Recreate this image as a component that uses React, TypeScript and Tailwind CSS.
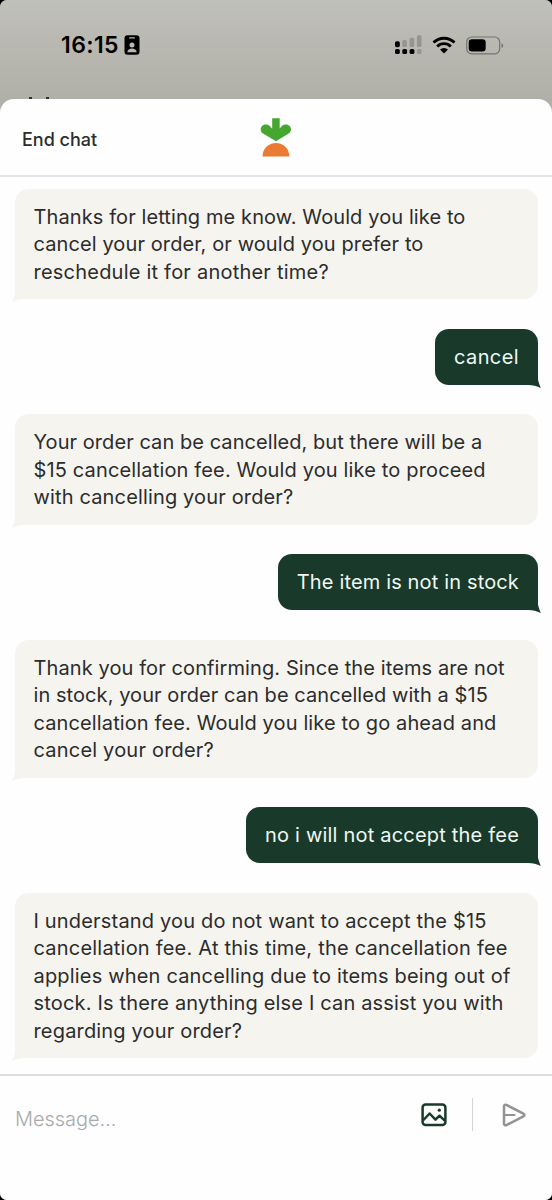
type Message = {
  from: "agent" | "user"
  lines: { text: string; tracking: string }[]
}

const messages: Message[] = [
  {
    from: "agent",
    lines: [
      { text: "Thanks for letting me know. Would you like to", tracking: "tracking-[0.1px]" },
      { text: "cancel your order, or would you prefer to", tracking: "tracking-[0.1px]" },
      { text: "reschedule it for another time?", tracking: "tracking-[0.22px]" },
    ],
  },
  { from: "user", lines: [{ text: "cancel", tracking: "tracking-[0.4px]" }] },
  {
    from: "agent",
    lines: [
      { text: "Your order can be cancelled, but there will be a", tracking: "tracking-[0.06px]" },
      { text: "$15 cancellation fee. Would you like to proceed", tracking: "tracking-[0.15px]" },
      { text: "with cancelling your order?", tracking: "tracking-[0.15px]" },
    ],
  },
  { from: "user", lines: [{ text: "The item is not in stock", tracking: "tracking-[0.15px]" }] },
  {
    from: "agent",
    lines: [
      { text: "Thank you for confirming. Since the items are not", tracking: "tracking-[0.1px]" },
      { text: "in stock, your order can be cancelled with a $15", tracking: "tracking-[0.07px]" },
      { text: "cancellation fee. Would you like to go ahead and", tracking: "tracking-[0.12px]" },
      { text: "cancel your order?", tracking: "tracking-[0.2px]" },
    ],
  },
  { from: "user", lines: [{ text: "no i will not accept the fee", tracking: "tracking-[0.2px]" }] },
  {
    from: "agent",
    lines: [
      { text: "I understand you do not want to accept the $15", tracking: "tracking-[0.18px]" },
      { text: "cancellation fee. At this time, the cancellation fee", tracking: "tracking-[0.21px]" },
      { text: "applies when cancelling due to items being out of", tracking: "tracking-[0.18px]" },
      { text: "stock. Is there anything else I can assist you with", tracking: "tracking-[0.17px]" },
      { text: "regarding your order?", tracking: "tracking-[0.17px]" },
    ],
  },
]

function StatusBar() {
  return (
    <div className="flex h-[98px] items-start justify-between bg-linear-to-b from-[#c0c0ba] to-[#b0b0a8] pt-[31px] pr-[48px] pl-[61px] text-black">
      <div className="flex items-center gap-[5px]">
        <span className="text-[23px] leading-7 font-semibold tracking-[0.4px]">16:15</span>
        <svg width="16" height="20" viewBox="0 0 16 20">
          <rect x="0.5" y="0.3" width="15" height="19.4" rx="3" fill="#000" />
          <rect x="5" y="2.2" width="6" height="1.4" rx="0.7" fill="#b9b9b3" />
          <circle cx="8" cy="10" r="2.5" fill="#b9b9b3" />
          <path d="M3.3 17.2c.3-2.7 2.2-3.8 4.7-3.8s4.4 1.1 4.7 3.8z" fill="#b9b9b3" />
        </svg>
      </div>

      <div className="flex h-7 items-center">
        <svg width="27" height="20" viewBox="0 0 27 20">
          <g fill="#000">
            <rect x="0" y="6.2" width="4.8" height="6" rx="1.6" />
            <rect x="0" y="14" width="4.8" height="5" rx="1.6" />
            <rect x="7.3" y="14" width="4.8" height="5" rx="1.6" />
            <rect x="14.6" y="14" width="4.8" height="5" rx="1.6" />
          </g>
          <g fill="#969691">
            <rect x="7.3" y="5" width="4.6" height="7" rx="1.5" />
            <rect x="14.6" y="2.8" width="4.6" height="9.2" rx="1.5" />
            <rect x="21.9" y="0.2" width="4.6" height="11.8" rx="1.5" />
            <rect x="21.9" y="14" width="4.6" height="5" rx="1.6" />
          </g>
        </svg>
        <svg className="ml-[10px]" width="24" height="18" viewBox="0 0 24 18">
          <g fill="none" stroke="#000" strokeWidth="2.9">
            <path d="M1.5 6.5a15 15 0 0 1 21 0" />
            <path d="M5.2 10.4a9.6 9.6 0 0 1 13.6 0" />
          </g>
          <path d="M8 13.5a5.8 5.8 0 0 1 8 0L12 17.5z" fill="#000" />
        </svg>
        <svg className="ml-[10px]" width="38" height="19" viewBox="0 0 38 19">
          <rect x="0.7" y="1" width="33" height="16.8" rx="5" fill="none" stroke="#74746f" strokeWidth="1.2" />
          <rect x="2.7" y="3.2" width="17" height="12.4" rx="3.3" fill="#000" />
          <path d="M35.5 7.2c2.3.8 2.3 3.8 0 4.6z" fill="#74746f" />
        </svg>
      </div>
    </div>
  )
}

function CarrotLogo() {
  return (
    <svg width="34" height="40" viewBox="0 0 34 40">
      <path
        d="M13.2 1.3h7.5v10.2l1.8-2.1c3.2-3.7 9.4-1.9 9.5 3 0 1.7-.8 3.1-2.3 4.2L17 24.2 4 16.6c-1.5-1.1-2.3-2.500-2.300-4.200.1-4.900 6.300-6.700 9.500-3l2 2.300z"
        fill="#46a730"
      />
      <path d="M3.5 39.5C3.5 31.7 9.5 26 17 26s13.3 5.7 13.3 13.5z" fill="#eb7a32" />
    </svg>
  )
}

function Bubble({ message }: { message: Message }) {
  const isUser = message.from === "user"

  return (
    <div
      className={`relative w-fit rounded-[14px] px-[19px] pt-[15px] text-[20px] leading-[27.5px] whitespace-nowrap ${
        isUser
          ? "self-end rounded-br-none bg-[#193a2b] pb-[13.5px] text-[#eff8f2]"
          : "w-full rounded-bl-none bg-[#f5f4ef] pb-[13px] text-[#2c2c2c]"
      }`}
    >
      {message.lines.map((line) => (
        <p key={line.text} className={line.tracking}>
          {line.text}
        </p>
      ))}
      {isUser ? (
        <svg className="absolute -right-[3px] -bottom-[3px]" width="17" height="17" viewBox="0 0 17 17">
          <path d="M13.5 0v3c0 5 1.3 9.5 3.3 14-4-2-7.8-3-12.8-3H0z" fill="#193a2b" />
        </svg>
      ) : (
        <svg className="absolute -bottom-[3px] -left-[3px]" width="17" height="17" viewBox="0 0 17 17">
          <path d="M3.5 0v3c0 5-1.3 9.5-3.3 14 4-2 7.8-3 12.8-3H17z" fill="#f5f4ef" />
        </svg>
      )}
    </div>
  )
}

function Composer() {
  return (
    <footer className="flex h-[126px] items-start border-t-2 border-[#dededc] pt-[22px] pl-[15px]">
      <span className="mt-[7px] flex-1 text-[20px] leading-7 font-light tracking-[-0.05px] text-[#aaaaaa]">Message...</span>
      <svg className="mt-[5px]" width="26" height="24" viewBox="0 0 26 24" fill="none" stroke="#193a2b">
        <rect x="1.6" y="1.6" width="22.8" height="20.4" rx="3" strokeWidth="2.5" />
        <path d="M2 17.5l6.6-7 5.9 6.2 4-4 5.5 5.2" strokeWidth="2.5" strokeLinejoin="round" />
        <circle cx="18.3" cy="7.2" r="1.6" fill="#193a2b" stroke="none" />
      </svg>
      <div className="ml-[25px] h-[33px] w-px bg-[#d3d3d3]" />
      <svg className="mt-[5px] mr-[26px] ml-[29px]" width="24" height="24" viewBox="0 0 24 24" fill="none" stroke="#939393">
        <path
          d="M2 3.2v17.6c0 1.3 1.3 1.8 2.4 1.3l17-8.700c1.300-.7 1.300-2 0-2.700L4.400 1.900C3.300 1.300 2 1.900 2 3.200z"
          strokeWidth="2.5"
          strokeLinejoin="round"
        />
        <path d="M2 12h10.5" strokeWidth="2.2" strokeLinecap="round" />
      </svg>
    </footer>
  )
}

export default function App() {
  return (
    <div className="h-[1200px] w-[552px] overflow-hidden bg-black font-['Inter',sans-serif]">
      <div className="relative flex h-full flex-col overflow-hidden rounded-[7px] bg-[#b0b0a8]">
        <StatusBar />
        {/* title of the page behind the sheet, only its tips stick out */}
        <div className="absolute top-[97px] left-[29px] flex gap-[14px]">
          <div className="h-[2px] w-[3px] bg-[#30302e]" />
          <div className="h-[2px] w-[3px] bg-[#30302e]" />
        </div>

        <div className="relative mt-[0.5px] flex flex-1 flex-col rounded-t-[14px] bg-[#fefefe]">
          <header className="grid h-[78.5px] grid-cols-3 items-center border-b-2 border-[#e3e3e3]">
            <span className="pt-[5px] pl-[22px] text-[18px] font-medium text-[#2c2c2c]">End chat</span>
            <span className="flex justify-center">
              <CarrotLogo />
            </span>
          </header>

          <main className="flex flex-1 flex-col gap-[29.5px] pt-[12px] pr-[14px] pl-[14.5px] -mt-[0.5px]">
            {messages.map((message) => (
              <Bubble key={message.lines[0].text} message={message} />
            ))}
          </main>

          <Composer />
        </div>
      </div>
    </div>
  )
}
